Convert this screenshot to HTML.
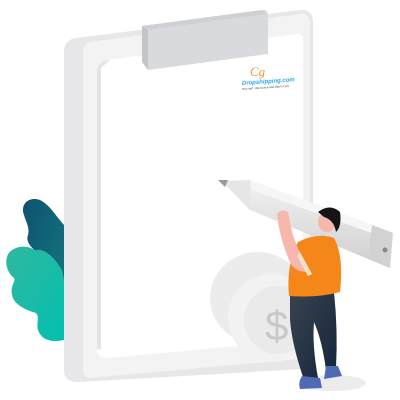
<!DOCTYPE html>
<html><head><meta charset="utf-8"><style>
html,body{margin:0;padding:0;background:#fff;width:400px;height:400px;overflow:hidden}
svg{display:block}
</style></head><body>
<svg width="400" height="400" viewBox="0 0 400 400" xmlns="http://www.w3.org/2000/svg">
<defs>
<linearGradient id="lf1" x1="0" y1="0" x2="1" y2="1"><stop offset="0" stop-color="#0e5270"/><stop offset="1" stop-color="#147a80"/></linearGradient>
<linearGradient id="lf2" x1="0" y1="0" x2="1" y2="1"><stop offset="0" stop-color="#2fb8a0"/><stop offset="1" stop-color="#04bfae"/></linearGradient>
<linearGradient id="pen" x1="0" y1="0" x2="0" y2="1"><stop offset="0" stop-color="#f2f2f2"/><stop offset="1" stop-color="#cfcfcf"/></linearGradient>
<linearGradient id="pants" x1="0" y1="0" x2="1" y2="1"><stop offset="0" stop-color="#3a4450"/><stop offset="1" stop-color="#13243a"/></linearGradient>
</defs>
<!-- leaves -->
<path d="M64 225 C55 215 50 205 40 200 C28 196 20 205 24 215 C26 222 30 228 28 235 C24 245 40 255 50 260 L64 330Z" fill="url(#lf1)"/>
<path d="M64 340 C55 342 42 342 38 330 C36 322 40 318 36 313 C26 310 14 305 12 295 C10 285 16 282 14 278 C4 270 4 255 12 250 C20 245 28 246 35 250 C45 248 55 258 62 270 L64 280Z" fill="url(#lf2)"/>
<!-- board -->
<path d="M76 38 L300 10 Q313 9 313 22 L313 360 Q313 368 305 369 L78 382 Q64 382 64 370 L64 52 Q64 40 76 38Z" fill="#e7e7e9"/>
<path d="M90 42 L300 14 Q310 13 310 24 L310 358 L90 378 Q83 378 83 370 L83 52 Q83 44 90 42Z" fill="#f3f3f4"/>
<path d="M108 60 L296 34 Q303 33 303 40 L303 340 L108 358 Q97 359 97 348 L97 72 Q97 62 108 60Z" fill="#ffffff"/>
<path d="M97 72 Q97 62 108 60 L110 60 L101 68 L101 350 Q97 349 97 348Z" fill="#e4e4e6"/>
<!-- clip -->
<path d="M142 26 L262 10 Q268 9 268 16 L268 54 L148 70 L148 30Z" fill="#d9dadd"/>
<path d="M142 26 L262 10 L266 14 L146 30Z" fill="#cfd0d3"/>
<path d="M142 26 L148 30 L148 70 L142 62Z" fill="#c4c5c8"/>
<!-- logo -->
<text x="250" y="76" font-family="Liberation Serif,serif" font-style="italic" font-size="13" fill="#f29436">Cg</text>
<text x="242" y="85" font-family="Liberation Sans,sans-serif" font-size="6" font-weight="bold" font-style="italic" fill="#2aa7e4" transform="rotate(-4 242 85)">Dropshipping.com</text>
<text x="242" y="90" font-family="Liberation Sans,sans-serif" font-size="2.8" fill="#333" transform="rotate(-4 242 90)">Your self - We source and ship for you</text>
<!-- coin -->
<ellipse cx="258" cy="298" rx="48" ry="46" fill="#ececed"/>
<ellipse cx="272" cy="318" rx="44" ry="44" fill="#f2f2f3"/>
<ellipse cx="278" cy="320" rx="34" ry="34" fill="#eaeaeb"/>
<text x="265" y="340" font-family="Liberation Sans,sans-serif" font-size="42" fill="#c8c8ca">$</text>
<!-- shadow -->
<ellipse cx="333" cy="383" rx="33" ry="8" fill="#ececed"/>
<!-- pants/legs -->
<path d="M290 294 L334 292 Q338 330 336 368 L326 370 Q322 340 314 322 Q312 345 318 378 L304 380 Q292 345 290 320Z" fill="url(#pants)"/>
<path d="M302 376 L320 378 L322 388 L300 389 Q298 382 302 376Z" fill="#4f6ab5"/>
<path d="M326 366 L338 366 L342 376 L324 379Z" fill="#4f6ab5"/>
<!-- pencil -->
<path d="M222 181 L250 180 L392 232 L390 268 L250 210 Z" fill="url(#pen)"/>
<path d="M250 180 L392 232 L391 240 L252 190Z" fill="#f6f6f6"/>
<path d="M222 181 L250 180 L250 210Z" fill="#e6e6e6"/>
<path d="M218 180 L228 180 L225 187Z" fill="#9a9a9a"/>
<path d="M372 225 L393 233 L390 268 L368 259Z" fill="#d2d2d2"/>
<circle cx="385" cy="250" r="2.5" fill="#888"/>
<!-- shirt -->
<path d="M298 242 Q318 232 334 238 Q344 256 340 292 Q318 298 289 296 Q286 265 298 242Z" fill="#f5861a"/>
<!-- arm -->
<path d="M277 215 Q280 208 288 212 L292 232 Q298 250 302 256 L308 272 Q294 272 290 262 Q280 240 277 215Z" fill="#f7b7ad"/>
<path d="M300 252 L312 274 L308 276 L297 256Z" fill="#f3e2c8"/>
<!-- head -->
<ellipse cx="327" cy="222" rx="9" ry="10" fill="#f7b7ad"/>
<path d="M318 212 Q330 203 340 212 Q342 226 336 232 Q334 220 324 217Z" fill="#141414"/>
</svg>
</body></html>
